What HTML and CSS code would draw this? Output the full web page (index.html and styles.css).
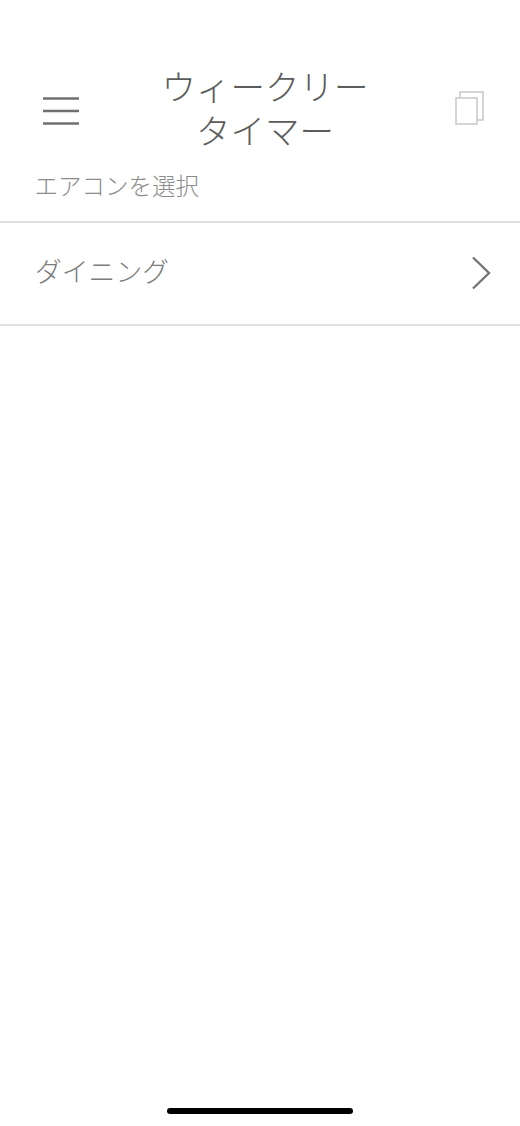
FILE: index.html
```html
<!DOCTYPE html>
<html lang="ja">
<head>
  <meta charset="UTF-8" />
  <meta name="viewport" content="width=device-width, initial-scale=1.0" />
  <title>ウィークリータイマー</title>
  <link rel="stylesheet" href="styles.css">
</head>
<body>
  <div class="screen">
    <header class="header">
      <button class="icon-btn menu-btn" aria-label="メニュー">
        <svg width="36" height="28" viewBox="0 0 36 28">
          <path d="M0 1.5H36M0 14H36M0 26.500H36" stroke="#707070" stroke-width="2.500" fill="none" />
        </svg>
      </button>
      <h1 class="title">ウィークリー<br>タイマー</h1>
      <button class="icon-btn copy-btn" aria-label="コピー">
        <svg width="29" height="34" viewBox="0 0 29 34">
          <path d="M5 6V1H28V29H22" stroke="#c8c8c8" stroke-width="1.500" fill="none" />
          <rect x="1" y="7" width="21" height="26" stroke="#c8c8c8" stroke-width="1.500" fill="#fff" />
        </svg>
      </button>
    </header>

    <p class="section-label">エアコンを選択</p>

    <ul class="list">
      <li class="list-row">
        <span class="row-name">ダイニング</span>
        <svg class="row-arrow" width="20" height="34" viewBox="0 0 20 34">
          <path d="M2 1.500L18 17L2 32.500" stroke="#757575" stroke-width="2.400" fill="none" />
        </svg>
      </li>
    </ul>

    <div class="home-bar"></div>
  </div>
</body>
</html>
```

FILE: styles.css
```css
* {
  box-sizing: border-box;
}

body {
  margin: 0;
  background: #fff;
  font-family: "Noto Sans CJK JP", "Liberation Sans", sans-serif;
}

.screen {
  height: 1126px;
  display: flex;
  flex-direction: column;
}

.header {
  display: flex;
  align-items: center;
  justify-content: space-between;
  padding: 63px 36px 0 43px;
}

.icon-btn {
  border: none;
  background: none;
  padding: 0;
  display: flex;
}

.menu-btn {
  margin-top: 8px;
}

.copy-btn {
  margin-top: 2px;
}

.title {
  margin: 0 0 0 -4px;
  font-size: 34.500px;
  font-weight: 300;
  line-height: 44px;
  color: #5c5c5c;
  text-align: center;
}

.section-label {
  margin: 0;
  padding: 16px 0 0 34.500px;
  height: 70px;
  font-size: 23.500px;
  font-weight: 300;
  line-height: 36px;
  color: #8c8c8c;
}

.list {
  list-style: none;
  margin: 0;
  padding: 0;
  border-top: 2px solid #e0e0e0;
}

.list-row {
  height: 103px;
  display: flex;
  align-items: center;
  justify-content: space-between;
  padding: 0 29px 0 35px;
  border-bottom: 2px solid #e0e0e0;
  font-size: 26.800px;
  font-weight: 300;
  color: #7c7c7c;
}

.row-name {
  margin-bottom: 6px;
}

.row-arrow {
  margin-bottom: 2px;
}

.home-bar {
  width: 186px;
  height: 6px;
  margin: auto 0 12px 167px;
  border-radius: 3px;
  background: #000;
}
```
